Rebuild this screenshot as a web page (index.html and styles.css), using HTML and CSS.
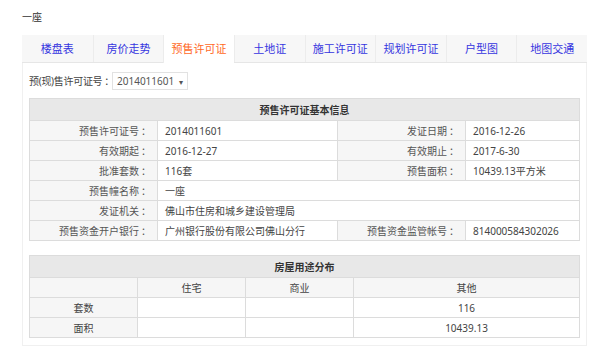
FILE: index.html
```html
<!DOCTYPE html>
<html lang="zh-CN">

<head>
    <meta charset="UTF-8">
    <title>预售许可证</title>
    <link rel="stylesheet" href="styles.css">
</head>

<body>
    <div class="page">
        <div class="title">一座</div>
        <ul class="tabs">
            <li>楼盘表</li>
            <li>房价走势</li>
            <li class="active">预售许可证</li>
            <li>土地证</li>
            <li>施工许可证</li>
            <li>规划许可证</li>
            <li>户型图</li>
            <li>地图交通</li>
        </ul>
        <div class="panel">
            <div class="picker">
                <span>预(现)售许可证号<i class="colon">：</i></span>
                <div class="select">2014011601 <span class="caret">▾</span></div>
            </div>

            <table class="info">
                <colgroup>
                    <col class="col-label">
                    <col class="col-value">
                    <col class="col-label">
                    <col>
                </colgroup>
                <tr>
                    <th colspan="4">预售许可证基本信息</th>
                </tr>
                <tr>
                    <td class="label">预售许可证号<i class="colon">：</i></td>
                    <td class="value">2014011601</td>
                    <td class="label">发证日期<i class="colon">：</i></td>
                    <td class="value">2016-12-26</td>
                </tr>
                <tr>
                    <td class="label">有效期起<i class="colon">：</i></td>
                    <td class="value">2016-12-27</td>
                    <td class="label">有效期止<i class="colon">：</i></td>
                    <td class="value">2017-6-30</td>
                </tr>
                <tr>
                    <td class="label">批准套数<i class="colon">：</i></td>
                    <td class="value">116套</td>
                    <td class="label">预售面积<i class="colon">：</i></td>
                    <td class="value">10439.13平方米</td>
                </tr>
                <tr>
                    <td class="label">预售幢名称<i class="colon">：</i></td>
                    <td class="value" colspan="3">一座</td>
                </tr>
                <tr>
                    <td class="label">发证机关<i class="colon">：</i></td>
                    <td class="value" colspan="3">佛山市住房和城乡建设管理局</td>
                </tr>
                <tr>
                    <td class="label">预售资金开户银行<i class="colon">：</i></td>
                    <td class="value">广州银行股份有限公司佛山分行</td>
                    <td class="label">预售资金监管帐号<i class="colon">：</i></td>
                    <td class="value">814000584302026</td>
                </tr>
            </table>

            <table class="usage">
                <colgroup>
                    <col class="col-use">
                    <col class="col-use">
                    <col class="col-use">
                    <col>
                </colgroup>
                <tr>
                    <th colspan="4">房屋用途分布</th>
                </tr>
                <tr class="sub">
                    <td></td>
                    <td>住宅</td>
                    <td>商业</td>
                    <td>其他</td>
                </tr>
                <tr>
                    <td class="name">套数</td>
                    <td></td>
                    <td></td>
                    <td>116</td>
                </tr>
                <tr>
                    <td class="name">面积</td>
                    <td></td>
                    <td></td>
                    <td>10439.13</td>
                </tr>
            </table>
        </div>
    </div>
</body>

</html>
```

FILE: styles.css
```css
body {
    margin: 0;
    background-color: #ffffff;
    font-family: "Noto Sans", "Noto Sans CJK SC", sans-serif;
    color: #444;
}

.page {
    width: 565px;
    padding: 10px 0 0 22px;
}

.title {
    font-size: 10px;
    height: 25px;
    line-height: 15px;
    color: #333;
}

.tabs {
    display: grid;
    grid-template-columns: repeat(8, 1fr);
    margin: 0;
    padding: 0;
    list-style: none;
    background-color: #f7f7f7;
    border-bottom: 1px solid #e6e6e6;
}

.tabs li {
    height: 27px;
    line-height: 27px;
    text-align: center;
    font-size: 11px;
    color: #3535e0;
    border-left: 1px solid #ececec;
}

.tabs li:first-child {
    border-left: none;
}

.tabs li.active {
    background-color: #ffffff;
    color: #ff6a1f;
    margin-bottom: -1px;
    height: 28px;
}

.panel {
    border: 1px solid #f0f0f0;
    border-top: none;
    padding: 0 6px 7px 6px;
}

.picker {
    display: flex;
    align-items: center;
    height: 35px;
    font-size: 10px;
    color: #444;
    letter-spacing: -0.3px;
}

.colon {
    font-style: normal;
    font-family: "Noto Sans CJK TC", sans-serif;
    margin-left: 2px;
}

.select {
    margin-left: -2px;
    height: 16px;
    line-height: 16px;
    padding: 0 4px 0 4px;
    border: 1px solid #e2e2e2;
    font-size: 10px;
    letter-spacing: 0;
    color: #555;
}

.caret {
    font-size: 8px;
    margin-left: 2px;
}

table {
    width: 100%;
    table-layout: fixed;
    border-collapse: collapse;
    font-size: 10px;
}

th,
td {
    border: 1px solid #dcdcdc;
    padding: 0;
    white-space: nowrap;
}

th {
    height: 21px;
    background-color: #e8e8e8;
    font-weight: bold;
    color: #333;
}

.col-label {
    width: 128px;
}

.col-value {
    width: 180px;
}

.col-use {
    width: 108px;
}

.info td {
    height: 19px;
}

.info td.label {
    text-align: right;
    padding-right: 6px;
    background-color: #f6f6f6;
    color: #555;
}

.info td.value {
    padding-left: 7px;
    color: #444;
}

.usage {
    margin-top: 14px;
}

.usage td {
    height: 19px;
    text-align: center;
}

.usage tr.sub td,
.usage td.name {
    background-color: #f6f6f6;
}
```
